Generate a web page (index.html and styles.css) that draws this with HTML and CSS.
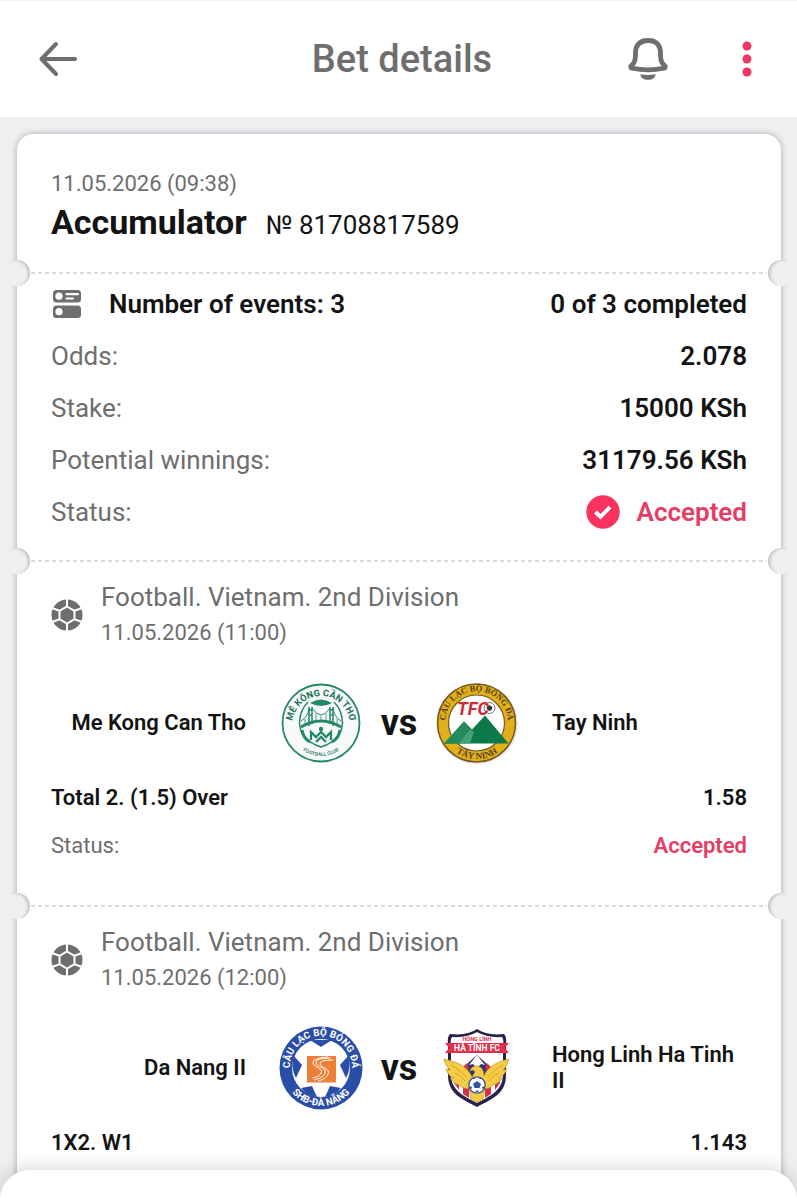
FILE: index.html
```html
<!DOCTYPE html>
<html lang="en">
<head>
<meta charset="utf-8">
<meta name="viewport" content="width=device-width, initial-scale=1">
<title>Bet details</title>
<link rel="stylesheet" href="styles.css">
</head>
<body>
<svg class="defs" width="0" height="0" aria-hidden="true">
  <symbol id="ball" viewBox="0 0 32 32">
    <circle cx="16" cy="16" r="15.5" fill="#6e6e6e"/>
    <path d="M16 7.500l7.500 4.300v8.400L16 24.500l-7.500-4.300v-8.400zM16 0v7.500M16 24.500V32M23.500 11.800L31 9M23.500 20.200L31 23M8.500 11.800L1 9M8.500 20.200L1 23" fill="none" stroke="#fff" stroke-width="2"/>
  </symbol>
</svg>
<div class="screen">
  <header class="topbar">
    <button class="icon-button" aria-label="Back">
      <svg width="40" height="36" viewBox="0 0 40 36" fill="none" stroke="#6e6e6e" stroke-width="4" stroke-linecap="round" stroke-linejoin="round"><path d="M37 18H3.500M18 3L3.500 18L18 33"/></svg>
    </button>
    <h1 class="topbar-title">Bet details</h1>
    <div class="actions">
      <button class="icon-button" aria-label="Notifications">
        <svg width="40" height="44" viewBox="0 0 40 44"><path d="M20 3.500C11 3.500 7.500 9 7.500 16C7.500 24 6.500 26 3 29C2.500 30 3 31 4 31.200C14 33.200 26 33.200 36 31.200C37 31 37.500 30 37 29C33.500 26 32.500 24 32.500 16C32.500 9 29 3.500 20 3.500Z" fill="none" stroke="#6e6e6e" stroke-width="4.800" stroke-linejoin="round"/><path d="M12.500 37.200q7.500 1.400 15 0c0 3-2.500 5.600-7.500 5.600s-7.500-2.600-7.500-5.600z" fill="#6e6e6e"/></svg>
      </button>
      <button class="icon-button" aria-label="More">
        <svg width="10" height="36" viewBox="0 0 10 36" fill="#ee3863"><circle cx="5" cy="5" r="4.500"/><circle cx="5" cy="18" r="4.500"/><circle cx="5" cy="31" r="4.500"/></svg>
      </button>
    </div>
  </header>

  <main class="content">
    <article class="ticket">
      <section class="section summary">
        <time class="date">11.05.2026 (09:38)</time>
        <div class="heading"><h2 class="kind">Accumulator</h2><span class="number">№ 81708817589</span></div>
      </section>

      <section class="section totals">
        <div class="row strong">
          <span class="events"><svg width="28" height="28" viewBox="0 0 28 28"><rect width="28" height="12.500" rx="3.500" fill="#6e6e6e"/><rect y="15.500" width="28" height="12.500" rx="3.500" fill="#6e6e6e"/><circle cx="6" cy="6.200" r="3.600" fill="#fff"/><circle cx="6" cy="21.700" r="3.600" fill="#fff"/><path d="M13.500 4.200h11.500M13.500 8.500h6.500" stroke="#fff" stroke-width="2.200" stroke-linecap="round"/></svg>Number of events: 3</span>
          <span>0 of 3 completed</span>
        </div>
        <div class="row"><span>Odds:</span><strong>2.078</strong></div>
        <div class="row"><span>Stake:</span><strong>15000 KSh</strong></div>
        <div class="row"><span>Potential winnings:</span><strong>31179.56 KSh</strong></div>
        <div class="row"><span>Status:</span><strong class="accepted"><svg width="34" height="34" viewBox="0 0 34 34"><circle cx="17" cy="17" r="16.700" fill="#fb325e"/><path d="M9.500 17l5 4.800L24 12.200" fill="none" stroke="#fff" stroke-width="4"/></svg>Accepted</strong></div>
      </section>

      <section class="section event">
        <div class="league">
          <svg class="sport" width="32" height="32"><use href="#ball"/></svg>
          <div><div class="league-name">Football. Vietnam. 2nd Division</div><time class="date">11.05.2026 (11:00)</time></div>
        </div>
        <div class="teams">
          <span class="team home">Me Kong Can Tho</span>
          <svg class="crest" viewBox="0 0 84 84">
            <defs><path id="mkTop" d="M13 44A29 29 0 1 1 71 44"/><path id="mkBottom" d="M9 42A33 33 0 0 0 75 42"/></defs>
            <circle cx="42" cy="42" r="38.500" fill="#f8faf9" stroke="#24876a" stroke-width="1.800"/>
            <text class="crest-text" font-size="9.300" fill="#1d7359" text-anchor="middle"><textPath href="#mkTop" startOffset="50%">MÊ KÔNG CẦN THƠ</textPath></text>
            <text class="crest-text" font-size="5" fill="#4a8b76" text-anchor="middle"><textPath href="#mkBottom" startOffset="50%">FOOTBALL CLUB</textPath></text>
            <g fill="none" stroke="#24876a">
              <path d="M29 21q-8 8-8.500 20c0 13 9 21 21.500 25 12.500-4 21.500-12 21.500-25Q63 29 55 21" stroke-width="1.500"/>
              <path d="M30 26v19M33 26v17M51 26v17M54 26v19M30 29h3M30 34h3M51 29h3M51 34h3" stroke-width="1.500"/>
              <path d="M22 40q7-4 8-13M33 27q9 14 18 0M54 27q1 9 8 13" stroke-width="1"/>
              <path d="M22 46q20-12 40 0" stroke-width="2.800"/><path d="M37 33v7M42 35v4M47 33v7M26 38v5M58 38v5" stroke-width=".8"/>
              <path d="M23 49q1 8 8 12M61 49q-1 8-8 12" stroke-width="3"/>
              <path d="M32 59v-8l5 5 5-5 5 5 5-5v8M37 61l5-5 5 5" stroke-width="2.300"/>
            </g>
            <path d="M31 22q11-7 22 0q-11 6-22 0z" fill="#24876a"/><circle cx="42" cy="48" r="2.200" fill="#24876a"/>
          </svg>
          <span class="versus">vs</span>
          <svg class="crest" viewBox="0 0 84 84">
            <defs><path id="tnTop" d="M12.500 54A31.500 31.500 0 1 1 70.500 54"/><path id="tnBottom" d="M6 42A35 35 0 0 0 78 42"/></defs>
            <circle cx="42.500" cy="43" r="40.500" fill="#efe8ef"/>
            <circle cx="41.500" cy="42" r="39" fill="#e0b01c" stroke="#775a1c" stroke-width="1.600"/>
            <circle cx="41.500" cy="42" r="28" fill="#fff" stroke="#765a24" stroke-width="1.200"/>
            <path d="M9 62.500L29 40.500l8 8L50 34.500l23.500 28z" fill="#0b7a48"/><path d="M9 62.500L29 40.500l5 7-8 15z" fill="#238a5c"/><path d="M24 62.500L35 48l4 3-4 11.500z" fill="#4aa079"/>
            <circle cx="54.500" cy="27" r="5.500" fill="#fff" stroke="#555" stroke-width=".8"/><path d="M54.500 24l3 2.200-1.200 3.400h-3.600l-1.200-3.400z" fill="#333"/>
            <text x="22" y="33.500" font-size="18" class="crest-italic" fill="#cf2d32">TFC</text>
            <text class="crest-serif" font-size="8.500" fill="#55401b" text-anchor="middle"><textPath href="#tnTop" startOffset="50%">CÂU LẠC BỘ BÓNG ĐÁ</textPath></text>
            <text class="crest-serif" font-size="9" fill="#55401b" text-anchor="middle"><textPath href="#tnBottom" startOffset="50%">TÂY NINH</textPath></text>
          </svg>
          <span class="team">Tay Ninh</span>
        </div>
        <div class="row small"><strong>Total 2. (1.5) Over</strong><strong>1.58</strong></div>
        <div class="row small"><span>Status:</span><strong class="accepted">Accepted</strong></div>
      </section>

      <section class="section event">
        <div class="league">
          <svg class="sport" width="32" height="32"><use href="#ball"/></svg>
          <div><div class="league-name">Football. Vietnam. 2nd Division</div><time class="date">11.05.2026 (12:00)</time></div>
        </div>
        <div class="teams">
          <span class="team home">Da Nang II</span>
          <svg class="crest" viewBox="0 0 84 84">
            <defs><path id="dnTop" d="M14 54A31 31 0 1 1 70 54"/><path id="dnBottom" d="M4 42A38 38 0 0 0 80 42"/></defs>
            <circle cx="42" cy="42" r="41.500" fill="#2a4da8"/>
            <circle cx="42" cy="42" r="29" fill="#fff"/>
            <g fill="#2a4da8"><path d="M31 14h22l-11 7z"/><path d="M15 30l8 9-6 13q-6-11-2-22z"/><path d="M69 30l-8 9 6 13q6-11 2-22z"/><path d="M22 62l11-2 5 11q-10-1-16-9z"/><path d="M62 62l-11-2-5 11q10-1 16-9z"/></g>
            <path d="M28 30h29v26.500H28z" fill="#ed8038"/>
            <path d="M51 32q-15 0-14 5c1 4 11 5 9 10-1 4-7 6-11 7M54 34q-14 0-13 4c1 4 11 5 8 10-1 4-6 6-10 7M49 31q-16 1-15 6c1 4 11 6 8 10-2 4-5 4-9 5" fill="none" stroke="#fff" stroke-width="1"/>
            <text class="crest-text" font-size="9.800" fill="#fff" text-anchor="middle"><textPath href="#dnTop" startOffset="50%">CÂU LẠC BỘ BÓNG ĐÁ</textPath></text>
            <text class="crest-text" font-size="9.800" fill="#fff" text-anchor="middle"><textPath href="#dnBottom" startOffset="50%">SHB-ĐÀ NẴNG</textPath></text>
          </svg>
          <span class="versus">vs</span>
          <svg class="crest" viewBox="0 0 84 84">
            <path d="M42 3Q52 10 69 8q3 3 2 10v31c0 19-14 24-29 32C27 73 13 68 13 49V18q-1-7 2-10Q32 10 42 3z" fill="#27234e"/>
            <path d="M42 6Q52 12 67 11q2 3 1 8v29c0 17-13 22-26 29C29 70 16 65 16 48V19q-1-5 1-8 15 1 25-5z" fill="#fff"/>
            <path d="M19 46h5v18l-5-7zM28 50h6v22l-6-4zM50 50h6v18l-6 4zM60 46h5v11l-5 7z" fill="#d83047"/>
            <path d="M42 29l9 8 6 10-15 9-15-9 6-10z" fill="#303276"/><path d="M42 29l8 10-4-1-4 4-4-4-4 1z" fill="#fff"/><path d="M27 42l5-5 2 5-4 4zM57 42l-5-5-2 5 4 4z" fill="#d83047"/>
            <path d="M10 17h64l-4 5 4 5H10l4-5z" fill="#e52f49"/>
            <path d="M9 33q13 3 19 7 7 5 9 11l3-5q-1-3-5-1 1-5 7-5 7 1 7 10 2-6 8-10 5-4 17-7-2 8-6 11l4-1q-3 7-8 9h4q-5 6-10 7-5 5-8 3l-2 11q-6 6-12 0l-2-11q-5 2-10-3-5-1-9-7h4q-6-2-8-9l4 1q-4-3-6-10z" fill="#f5cb43" stroke="#b78d2d" stroke-width=".6"/>
            <path d="M16 39q10 5 16 13M20 47q6 2 10 8M68 39q-10 5-16 13M64 47q-6 2-10 8" fill="none" stroke="#d5a52a" stroke-width="1"/>
            <circle cx="42" cy="59" r="8.200" fill="#fff" stroke="#33509b" stroke-width="1.200"/><path d="M42 55l4 3-1.500 4h-5L38 58zM36 53l3-2 1 2zM48 53l-3-2-1 2zM34 60l2 4 1-3zM50 60l-2 4-1-3zM40 66h4l-2-2z" fill="#33509b"/>
            <text x="42" y="15" font-size="5.500" fill="#d83047" text-anchor="middle" class="crest-text">HỒNG LĨNH</text>
            <text x="42" y="25" font-size="8.500" fill="#fff" text-anchor="middle" class="crest-text">HÀ TĨNH FC</text>
          </svg>
          <span class="team">Hong Linh Ha Tinh II</span>
        </div>
        <div class="row small"><strong>1X2. W1</strong><strong>1.143</strong></div>
      </section>
    </article>
  </main>
  <div class="sheet"></div>
</div>
</body>
</html>
```
FILE: styles.css
```css
* { box-sizing: border-box; }
body { margin: 0; background: #edeff1; color: #131313; font-family: Roboto, "Liberation Sans", sans-serif; font-size: 26px; }
h1, h2 { margin: 0; }
strong { font-weight: 600; }
.defs { position: absolute; }
.screen { height: 100vh; display: flex; flex-direction: column; overflow: hidden; }
.topbar { flex: none; height: 117px; padding: 0 45px 0 38px; display: grid; grid-template-columns: 1fr auto 1fr; align-items: center; background: #fff; border-top: 1px solid #f0f0f0; }
.topbar-title { margin-left: 14px; font-size: 38px; font-weight: 500; color: #6e6e6e; }
.icon-button { border: 0; padding: 0; background: none; display: flex; justify-self: start; }
.actions { display: flex; align-items: center; justify-content: flex-end; gap: 74px; }
.content { flex: 1; min-height: 0; padding: 17px 16px 0 17px; display: flex; }
.ticket { flex: 1; min-width: 0; height: max-content; min-height: 100%; background: #fff; border-radius: 16px 16px 0 0; box-shadow: 0 0 6px rgba(60, 65, 70, .4); }
.section { position: relative; padding: 0 34px; }
.section + .section { border-top: 2px solid transparent; background: repeating-linear-gradient(90deg, #dadada 0 4px, transparent 4px 7px) 14px 0 / calc(100% - 28px) 2px no-repeat border-box; }
.section + .section::before, .section + .section::after { content: ""; position: absolute; top: -14px; width: 19px; height: 26px; background: #edeff1; }
.section + .section::before { left: -6px; border-radius: 0 13px 13px 0; box-shadow: inset -3px 1px 3px -1px #bfc1c3; }
.section + .section::after { right: -6px; border-radius: 13px 0 0 13px; box-shadow: inset 3px 1px 3px -1px #bfc1c3; }
.summary { padding-top: 34px; padding-bottom: 25px; }
.date { display: block; font-size: 22px; line-height: 32px; color: #6e6e6e; }
.heading { display: flex; align-items: baseline; gap: 19px; line-height: 44px; }
.kind { font-size: 34px; font-weight: 700; }
.number { font-size: 26px; }
.totals { padding-top: 4px; padding-bottom: 22px; }
.row { height: 52px; display: flex; align-items: center; justify-content: space-between; color: #6e6e6e; }
.row strong, .row.strong { color: #131313; font-weight: 600; }
.events { display: flex; align-items: center; gap: 28px; padding-left: 2px; }
.row .accepted { display: flex; align-items: center; gap: 17px; color: #e63d65; }
.event { padding-top: 17px; padding-bottom: 36px; }
.league { display: flex; align-items: center; gap: 18px; color: #6e6e6e; }
.league-name { line-height: 36px; }
.league .date { line-height: 36px; }
.teams { margin: 30px 0 8px; display: grid; grid-template-columns: 1fr 84px 72px 84px 1fr; align-items: center; }
.team { padding-left: 33px; font-size: 22px; line-height: 26px; font-weight: 600; }
.home { padding: 0 33px 0 0; text-align: right; }
.crest { width: 84px; height: 84px; }
.versus { text-align: center; font-size: 36px; font-weight: 700; }
.small { height: 48px; font-size: 22px; }
.sheet { position: fixed; left: 0; right: 0; bottom: 0; height: 30px; background: #fff; border-radius: 30px 30px 0 0; box-shadow: 0 0 20px rgba(0, 0, 0, .2); }
.crest-text { font-family: Roboto, sans-serif; font-weight: 700; }
.crest-italic { font-family: Roboto, sans-serif; font-weight: 700; font-style: italic; }
.crest-serif { font-family: "Liberation Serif", serif; font-weight: 700; }
```
